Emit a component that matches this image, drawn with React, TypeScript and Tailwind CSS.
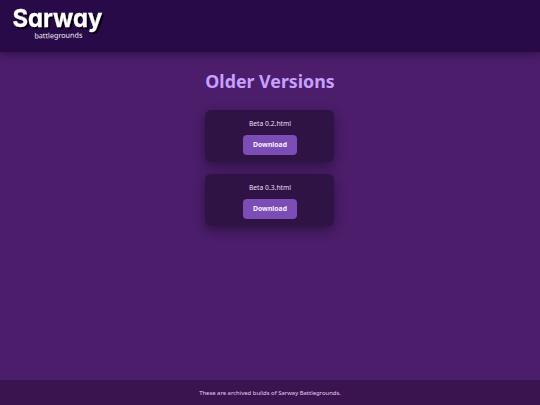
import React from 'react';

interface Build {
  id: string;
  file: string;
}

const builds: Build[] = [
  { id: '0.2', file: 'Beta 0.2.html' },
  { id: '0.3', file: 'Beta 0.3.html' },
];

const Logo: React.FC = () => (
  <svg width="100" height="44" viewBox="0 0 100 44" className="block overflow-visible" role="img" aria-label="Sarway Battlegrounds">
    <text
      x="4.4"
      y="27"
      fontSize="24.6"
      textLength="90"
      lengthAdjust="spacingAndGlyphs"
      fill="#ffffff"
      stroke="#ffffff"
      strokeWidth="0.3"
      className="font-['Inter',sans-serif] font-bold [font-feature-settings:'cv11'] [filter:drop-shadow(2px_2px_0.6px_#0a0014)]"
    >
      Sarway
    </text>
    <text
      x="26.4"
      y="38"
      fontSize="7.2"
      textLength="48"
      lengthAdjust="spacingAndGlyphs"
      fill="#f3eefa"
      transform="rotate(-1 50 38)"
      className="font-['Noto_Sans',sans-serif]"
    >
      battlegrounds
    </text>
  </svg>
);

const BuildCard: React.FC<{ build: Build }> = ({ build }) => (
  <div className="flex h-[52px] w-[129px] flex-col items-center rounded-[6px] bg-[#2f1344] pt-[9px] pl-px shadow-[0_4px_12px_rgba(0,0,0,0.4)]">
    <p className="text-[6.75px] leading-[10px] text-[#e9ddf5]">{build.file}</p>
    <button className="mt-1.5 h-5 w-[54px] rounded-[4px] bg-[#7c4db6] pt-px text-[6.8px] font-bold text-[#f7f0ff]">
      Download
    </button>
  </div>
);

const App: React.FC = () => {
  return (
    <div className="flex h-screen flex-col overflow-hidden bg-[#4b1d6b] font-['Noto_Sans',sans-serif]">
      <header className="relative h-[52px] shrink-0 bg-[#280a48] pl-2 shadow-[0_2px_8px_rgba(0,0,0,0.4)]">
        <Logo />
      </header>

      <main className="flex flex-1 flex-col items-center pt-[17px] pr-px">
        <h1 className="pl-px text-[17.8px] leading-6 font-bold whitespace-nowrap text-[#c7a0ff]">Older Versions</h1>
        <div className="mt-[17px] flex flex-col gap-3">
          {builds.map(build => (
            <BuildCard key={build.id} build={build} />
          ))}
        </div>
      </main>

      <footer className="flex h-[25px] shrink-0 items-center justify-center bg-[#3a144f] pt-px text-[5.92px] text-[#e0d3ee]">
        These are archived builds of Sarway Battlegrounds.
      </footer>
    </div>
  );
};

export default App;
